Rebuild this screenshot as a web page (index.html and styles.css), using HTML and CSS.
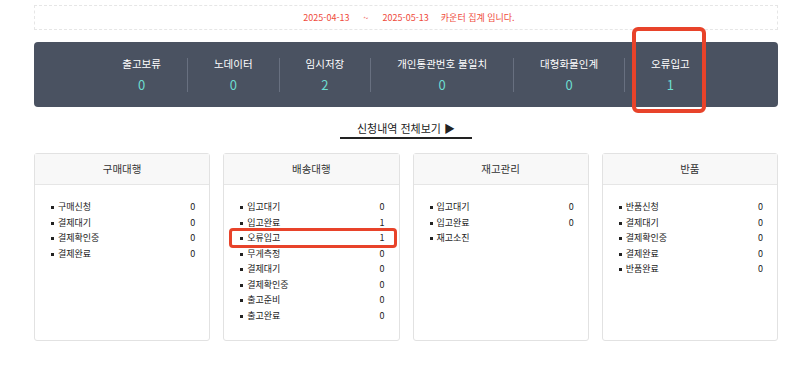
FILE: index.html
```html
<!DOCTYPE html>
<html lang="ko">
<head>
    <meta charset="UTF-8">
    <title>카운터 집계</title>
    <link rel="stylesheet" href="styles.css">
</head>
<body>

<div class="container">
    <div class="period">
        <span>2025-04-13</span>
        <span class="tilde">~</span>
        <span>2025-05-13</span>
        <span class="period-text">카운터 집계 입니다.</span>
    </div>

    <div class="stats">
        <div class="stat"><span class="stat-label">출고보류</span><span class="stat-num">0</span></div>
        <div class="stat"><span class="stat-label">노데이터</span><span class="stat-num">0</span></div>
        <div class="stat"><span class="stat-label">임시저장</span><span class="stat-num">2</span></div>
        <div class="stat"><span class="stat-label">개인통관번호 불일치</span><span class="stat-num">0</span></div>
        <div class="stat"><span class="stat-label">대형화물인계</span><span class="stat-num">0</span></div>
        <div class="stat">
            <span class="stat-label">오류입고</span><span class="stat-num">1</span>
            <span class="mark mark-stat"></span>
        </div>
    </div>

    <div class="more">
        <a href="#" class="more-link">신청내역 전체보기 ▶</a>
    </div>

    <div class="cards">
        <div class="card">
            <div class="card-head">구매대행</div>
            <ul class="card-list">
                <li><span>구매신청</span><span>0</span></li>
                <li><span>결제대기</span><span>0</span></li>
                <li><span>결제확인중</span><span>0</span></li>
                <li><span>결제완료</span><span>0</span></li>
            </ul>
        </div>
        <div class="card">
            <div class="card-head">배송대행</div>
            <ul class="card-list">
                <li><span>입고대기</span><span>0</span></li>
                <li><span>입고완료</span><span>1</span></li>
                <li><span>오류입고</span><span>1</span><span class="mark mark-row"></span></li>
                <li><span>무게측정</span><span>0</span></li>
                <li><span>결제대기</span><span>0</span></li>
                <li><span>결제확인중</span><span>0</span></li>
                <li><span>출고준비</span><span>0</span></li>
                <li><span>출고완료</span><span>0</span></li>
            </ul>
        </div>
        <div class="card">
            <div class="card-head">재고관리</div>
            <ul class="card-list">
                <li><span>입고대기</span><span>0</span></li>
                <li><span>입고완료</span><span>0</span></li>
                <li><span>재고소진</span><span></span></li>
            </ul>
        </div>
        <div class="card">
            <div class="card-head">반품</div>
            <ul class="card-list">
                <li><span>반품신청</span><span>0</span></li>
                <li><span>결제대기</span><span>0</span></li>
                <li><span>결제확인중</span><span>0</span></li>
                <li><span>결제완료</span><span>0</span></li>
                <li><span>반품완료</span><span>0</span></li>
            </ul>
        </div>
    </div>
</div>

</body>
</html>
```

FILE: styles.css
```css
body {
    margin: 0;
    background: #fff;
    color: #333;
    font-family: "Noto Sans CJK KR", "Noto Sans", sans-serif;
}
.container {
    margin: 0 22px 0 34px;
}

/* period line */
.period {
    margin-top: 5px;
    height: 23px;
    border: 1px dashed #e6e6e6;
    display: flex;
    align-items: center;
    justify-content: center;
    font-size: 9px;
    color: #ef4b3c;
    padding-left: 6px;
}
.tilde {
    margin: 0 14px;
}
.period-text {
    margin-left: 12px;
}

/* stats bar */
.stats {
    margin-top: 12px;
    width: 744px;
    height: 65px;
    background: #4a5261;
    border-radius: 4px;
    display: flex;
    justify-content: center;
    align-items: center;
}
.stat {
    position: relative;
    display: flex;
    flex-direction: column;
    align-items: center;
    padding: 0 26px;
    height: 34px;
}
.stat + .stat {
    border-left: 1px solid #687080;
}
.stat-label {
    font-size: 10.5px;
    line-height: 12px;
    color: #fff;
}
.stat-num {
    margin-top: 8px;
    font-size: 13px;
    line-height: 14px;
    color: #6cdccf;
}

/* annotation boxes */
.mark {
    position: absolute;
    border: 4px solid #e8432a;
    border-radius: 6px;
    box-sizing: border-box;
}
.mark-stat {
    left: 50%;
    width: 74px;
    margin-left: -38px;
    top: -31px;
    height: 86px;
}
.mark-row {
    left: 5px;
    right: 2px;
    top: -2px;
    bottom: -2px;
    border-width: 3px;
    border-radius: 4px;
}

/* link */
.more {
    width: 744px;
    display: flex;
    justify-content: center;
    margin-top: 13px;
}
.more-link {
    display: block;
    padding: 0 17px 1px;
    font-size: 11px;
    line-height: 16px;
    color: #222;
    text-decoration: none;
    border-bottom: 2px solid #222;
}

/* cards */
.cards {
    width: 744px;
    margin-top: 14px;
    display: grid;
    grid-template-columns: repeat(4, 1fr);
    gap: 13px;
}
.card {
    height: 188px;
    border: 1px solid #e2e2e2;
    border-radius: 3px;
    box-sizing: border-box;
}
.card-head {
    height: 30px;
    line-height: 30px;
    background: #f8f8f8;
    border-bottom: 1px solid #e6e6e6;
    text-align: center;
    font-size: 10.5px;
    color: #333;
}
.card-list {
    list-style: none;
    margin: 0;
    padding: 14px 0 0;
}
.card-list li {
    position: relative;
    display: flex;
    justify-content: space-between;
    height: 15.5px;
    line-height: 15.5px;
    padding: 0 14px 0 23px;
    font-size: 9px;
    color: #222;
}
.card-list li::before {
    content: "";
    position: absolute;
    left: 16px;
    top: 7px;
    width: 3px;
    height: 3px;
    background: #222;
}
```
